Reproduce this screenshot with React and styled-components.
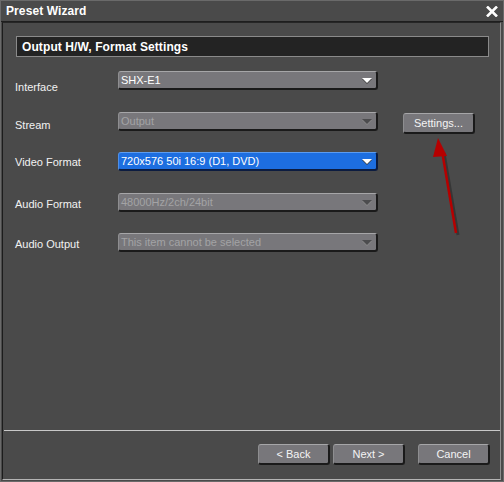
import styled, { createGlobalStyle } from "styled-components";

const Global = createGlobalStyle`
  html, body {
    margin: 0;
    padding: 0;
    background: #4a4a4a;
  }
  body {
    font-family: "Liberation Sans", Arial, sans-serif;
  }
`;

const Window = styled.div`
  position: relative;
  width: 504px;
  height: 482px;
  box-sizing: border-box;
  background: #4a4a4a;
  border: 1px solid #6a6a6a;
  display: flex;
  flex-direction: column;
  color: #fff;
`;

const TitleBar = styled.div`
  height: 20px;
  display: flex;
  align-items: center;
  justify-content: space-between;
  padding: 0 5px 0 5px;
  border-bottom: 1px solid #1e1e1e;
  font-size: 12px;
  font-weight: 700;
  letter-spacing: 0.1px;
`;

const Close = styled.svg`
  display: block;
  margin-top: 1px;
`;

const Body = styled.div`
  flex: 1;
  display: flex;
  flex-direction: column;
  margin: 0 2px 1px 1px;
  border-style: solid;
  border-width: 1px;
  border-color: #262626 #8e8e8e #b4b4b4 #1c1c1c;
`;

const Content = styled.div`
  flex: 1;
  padding: 13px 11px 0 13px;
`;

const Header = styled.div`
  height: 19px;
  display: flex;
  align-items: center;
  padding-left: 5px;
  background: #232323;
  border: 1px solid #8a8a8a;
  font-size: 12px;
  font-weight: 700;
  letter-spacing: 0.1px;
`;

const Form = styled.div`
  display: grid;
  grid-template-columns: 103px 260px 25px 73px;
  grid-auto-rows: 19px;
  row-gap: 21.5px;
  margin-top: 14px;
  margin-left: -1px;
`;

const Label = styled.div`
  grid-column: 1;
  font-size: 11px;
  color: #f2f2f2;
  align-self: center;
  transform: translateY(${(p) => p.$shift || 0}px);
`;

const Select = styled.div`
  position: relative;
  box-sizing: border-box;
  height: 19px;
  display: flex;
  align-items: center;
  padding-left: 2px;
  font-size: 11px;
  border-radius: 3px;
  border-style: solid;
  border-width: 1px 2px 2px 1px;
  border-color: ${(p) =>
    p.$active ? "#5c9cf0 #0c1c40 #0c1c40 #4f8fe6" : "#a6a6a8 #1a1a1a #1a1a1a #8e8e90"};
  background: ${(p) => (p.$active ? "#1d6ee0" : "#78777b")};
  color: ${(p) => (p.$disabled ? "#a3a3a5" : "#ffffff")};
  white-space: nowrap;
  overflow: hidden;
`;

const Arrow = styled.span`
  position: absolute;
  right: 4px;
  top: 6px;
  width: 0;
  height: 0;
  border-left: 5px solid transparent;
  border-right: 5px solid transparent;
  border-top: 5px solid ${(p) => (p.$disabled ? "#4c4c4e" : "#ffffff")};
  filter: drop-shadow(0 1px 0 ${(p) => (p.$disabled ? "#8a8a8a" : "#3a3a3a")});
`;

const Button = styled.button`
  box-sizing: border-box;
  width: 72px;
  height: 21px;
  padding: 0;
  font-family: "Liberation Sans", Arial, sans-serif;
  font-size: 11px;
  color: #f4f4f4;
  background: #78777b;
  border-radius: 3px;
  border-style: solid;
  border-width: 1px 2px 2px 1px;
  border-color: #a6a6a8 #1a1a1a #1a1a1a #8e8e90;
  cursor: default;
`;

const SideButton = styled(Button)`
  grid-column: 4;
  align-self: start;
  margin-top: 1px;
`;

const Separator = styled.div`
  height: 1px;
  background: #c8c8c8;
  margin: 0 0 1px 1px;
`;

const Footer = styled.div`
  height: 47px;
  display: flex;
  justify-content: flex-end;
  align-items: flex-start;
  padding: 12px 10px 0 0;
  box-sizing: border-box;
`;

const NavGroup = styled.div`
  display: flex;
  gap: 3px;
  margin-right: 13px;
`;

const Overlay = styled.svg`
  position: absolute;
  left: 0;
  top: 0;
  pointer-events: none;
`;

const rows = [
  { label: "Interface", value: "SHX-E1", shift: 6 },
  { label: "Stream", value: "Output", shift: 4, disabled: true, button: true },
  { label: "Video Format", value: "720x576 50i 16:9 (D1, DVD)", shift: 0, active: true },
  { label: "Audio Format", value: "48000Hz/2ch/24bit", shift: 2, disabled: true },
  { label: "Audio Output", value: "This item cannot be selected", shift: 1, disabled: true },
];

function FormRow({ label, value, shift, disabled, active, button }) {
  return (
    <>
      <Label $shift={shift}>{label}</Label>
      <Select $disabled={disabled} $active={active}>
        {value}
        <Arrow $disabled={disabled} />
      </Select>
      {button && <SideButton>Settings...</SideButton>}
    </>
  );
}

export default function App() {
  return (
    <>
      <Global />
      <Window>
        <TitleBar>
          <span>Preset Wizard</span>
          <Close width="12" height="11" viewBox="0 0 12 11">
            <path d="M1 0.5 L11 10.5 M11 0.5 L1 10.5" stroke="#ffffff" strokeWidth="2.6" />
          </Close>
        </TitleBar>
        <Body>
          <Content>
            <Header>Output H/W, Format Settings</Header>
            <Form>
              {rows.map((r) => (
                <FormRow key={r.label} {...r} />
              ))}
            </Form>
          </Content>
          <Separator />
          <Footer>
            <NavGroup>
              <Button>&lt; Back</Button>
              <Button>Next &gt;</Button>
            </NavGroup>
            <Button>Cancel</Button>
          </Footer>
        </Body>
        <Overlay width="504" height="482">
          <line x1="457" y1="234" x2="443" y2="152" stroke="#2a2a2a" strokeWidth="3" opacity="0.6" />
          <line x1="455" y1="232" x2="441" y2="150" stroke="#b50000" strokeWidth="2.5" />
          <polygon points="437,137 446,155 432,156" fill="#b50000" />
        </Overlay>
      </Window>
    </>
  );
}
